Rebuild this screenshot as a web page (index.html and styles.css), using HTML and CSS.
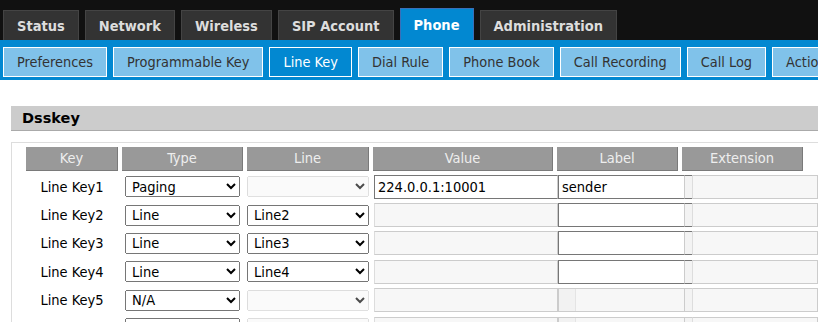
FILE: index.html
```html
<!DOCTYPE html>
<html lang="en">
<head>
    <meta charset="UTF-8">
    <title>Phone - Line Key</title>
    <link rel="stylesheet" href="styles.css">
</head>
<body>
    <div class="topnav">
        <a class="tab">Status</a>
        <a class="tab">Network</a>
        <a class="tab">Wireless</a>
        <a class="tab">SIP Account</a>
        <a class="tab active">Phone</a>
        <a class="tab">Administration</a>
    </div>
    <div class="subnav">
        <a class="subtab">Preferences</a>
        <a class="subtab">Programmable Key</a>
        <a class="subtab active">Line Key</a>
        <a class="subtab">Dial Rule</a>
        <a class="subtab">Phone Book</a>
        <a class="subtab">Call Recording</a>
        <a class="subtab">Call Log</a>
        <a class="subtab">Action URL</a>
    </div>

    <div class="content">
        <div class="section-title">Dsskey</div>
        <div class="panel">
            <div class="dss-head">
                <span class="hcell h-key">Key</span>
                <span class="hcell h-type">Type</span>
                <span class="hcell h-line">Line</span>
                <span class="hcell h-value">Value</span>
                <span class="hcell h-label">Label</span>
                <span class="hcell h-ext">Extension</span>
            </div>

            <div class="dss-rows">
                <div class="dss-row">
                    <span class="key">Line Key1</span>
                    <select class="sel-type"><option>Paging</option></select>
                    <select class="sel-line" disabled><option></option></select>
                    <input class="fld-value" type="text" value="224.0.0.1:10001">
                    <span class="label-wrap"><input class="fld-label" type="text" value="sender"><span class="stub"></span></span>
                    <input class="fld-ext" type="text" disabled>
                </div>
                <div class="dss-row">
                    <span class="key">Line Key2</span>
                    <select class="sel-type"><option>Line</option></select>
                    <select class="sel-line"><option>Line2</option></select>
                    <input class="fld-value" type="text" disabled>
                    <span class="label-wrap"><input class="fld-label" type="text"><span class="stub"></span></span>
                    <input class="fld-ext" type="text" disabled>
                </div>
                <div class="dss-row">
                    <span class="key">Line Key3</span>
                    <select class="sel-type"><option>Line</option></select>
                    <select class="sel-line"><option>Line3</option></select>
                    <input class="fld-value" type="text" disabled>
                    <span class="label-wrap"><input class="fld-label" type="text"><span class="stub"></span></span>
                    <input class="fld-ext" type="text" disabled>
                </div>
                <div class="dss-row">
                    <span class="key">Line Key4</span>
                    <select class="sel-type"><option>Line</option></select>
                    <select class="sel-line"><option>Line4</option></select>
                    <input class="fld-value" type="text" disabled>
                    <span class="label-wrap"><input class="fld-label" type="text"><span class="stub"></span></span>
                    <input class="fld-ext" type="text" disabled>
                </div>
                <div class="dss-row">
                    <span class="key">Line Key5</span>
                    <select class="sel-type"><option>N/A</option></select>
                    <select class="sel-line" disabled><option></option></select>
                    <input class="fld-value" type="text" disabled>
                    <span class="label-wrap off"><input class="fld-label" type="text" disabled><span class="stub"></span></span>
                    <input class="fld-ext" type="text" disabled>
                </div>
                <div class="dss-row">
                    <span class="key">Line Key6</span>
                    <select class="sel-type"><option>N/A</option></select>
                    <select class="sel-line" disabled><option></option></select>
                    <input class="fld-value" type="text" disabled>
                    <span class="label-wrap off"><input class="fld-label" type="text" disabled><span class="stub"></span></span>
                    <input class="fld-ext" type="text" disabled>
                </div>
            </div>
        </div>
    </div>
</body>
</html>
```

FILE: styles.css
```css
body {
    margin: 0;
    padding: 0;
    font-family: 'DejaVu Sans Condensed', 'DejaVu Sans', sans-serif;
    font-size: 13px;
    color: #000;
    background-color: #fff;
    height: 322px;
    overflow: hidden;
}
.topnav {
    display: flex;
    align-items: flex-end;
    gap: 6px;
    height: 40px;
    padding-left: 3px;
    background-color: #111;
    white-space: nowrap;
}
.tab {
    display: flex;
    align-items: center;
    height: 29px;
    padding: 0 13px;
    background-color: #333;
    border: 1px solid #444;
    border-bottom: none;
    color: #ddd;
    font-weight: bold;
    font-size: 14.5px;
}
.tab.active {
    height: 31px;
    background-color: #0288d1;
    border-color: #3a6fb8;
    color: #fff;
}
.subnav {
    display: flex;
    gap: 6px;
    height: 40px;
    padding: 7px 0 0 3px;
    box-sizing: border-box;
    background-color: #0288d1;
    white-space: nowrap;
    overflow: hidden;
}
.subtab {
    display: flex;
    align-items: center;
    height: 28px;
    padding: 0 13px;
    background-color: #80c2ea;
    border: 1px solid #fff;
    color: #333;
    font-size: 14.4px;
    flex-shrink: 0;
}
.subtab.active {
    background-color: #0288d1;
    color: #fff;
}
.content {
    margin: 26px 0 0 11px;
}
.section-title {
    height: 24px;
    line-height: 25px;
    padding-left: 11px;
    background-color: #ccc;
    border-bottom: 1px solid #aaa;
    font-family: 'DejaVu Sans', sans-serif;
    font-weight: bold;
    font-size: 14.5px;
}
.panel {
    margin-top: 11px;
    width: 820px;
    padding: 4px 0 0 14px;
    border: 1px solid #ddd;
}
.dss-head {
    display: flex;
    gap: 4px;
}
.hcell {
    height: 24px;
    line-height: 23px;
    text-align: center;
    background-color: #999;
    border-right: 1px solid #7a7a7a;
    border-bottom: 1px solid #7a7a7a;
    color: #eee;
    font-size: 14.5px;
    box-sizing: border-box;
}
.h-key { width: 92px; }
.h-type { width: 121px; }
.h-line { width: 122px; }
.h-value { width: 180px; }
.h-label { width: 121px; }
.h-ext { width: 121px; }
.dss-rows {
    padding-top: 1.5px;
}
.dss-row {
    display: flex;
    align-items: center;
    height: 28.4px;
}
.key {
    width: 92px;
    text-align: center;
    font-size: 14.5px;
}
.dss-row select {
    height: 21px;
    font-family: inherit;
    font-size: 14.5px;
    color: #000;
    padding: 0 2px;
}
.sel-type {
    width: 115px;
    margin-left: 7px;
}
.sel-line {
    width: 122px;
    margin-left: 7px;
}
.dss-row input {
    height: 24px;
    box-sizing: border-box;
    font-family: inherit;
    font-size: 14.5px;
    padding: 0 3px;
    margin: 0;
    outline: none;
}
.fld-value {
    width: 184px;
    margin-left: 5px !important;
    border: 1px solid #767676;
    border-right-color: #ccc;
    border-radius: 0;
}
.fld-value:disabled,
.fld-ext:disabled {
    background-color: #f7f7f7;
    border: 1px solid #ccc;
    border-left-color: #ddd;
}
.label-wrap {
    display: flex;
    height: 24px;
}
.fld-label {
    width: 126px;
    border: 1px solid #767676;
    border-right: none;
    border-radius: 0;
    background-color: #fff;
}
.stub {
    width: 8px;
    border-top: 1px solid #767676;
    border-bottom: 1px solid #767676;
    border-left: 1px solid #ccc;
    background-color: #f3f3f3;
    box-sizing: border-box;
}
.label-wrap.off .fld-label {
    border: 1px solid #ccc;
    border-right: none;
    background: linear-gradient(to right, #f2f2f2 16px, #e4e4e4 16px, #e4e4e4 17px, #f7f7f7 17px);
}
.label-wrap.off .stub {
    border-color: #ccc;
}
.fld-ext {
    width: 126px;
}
```
